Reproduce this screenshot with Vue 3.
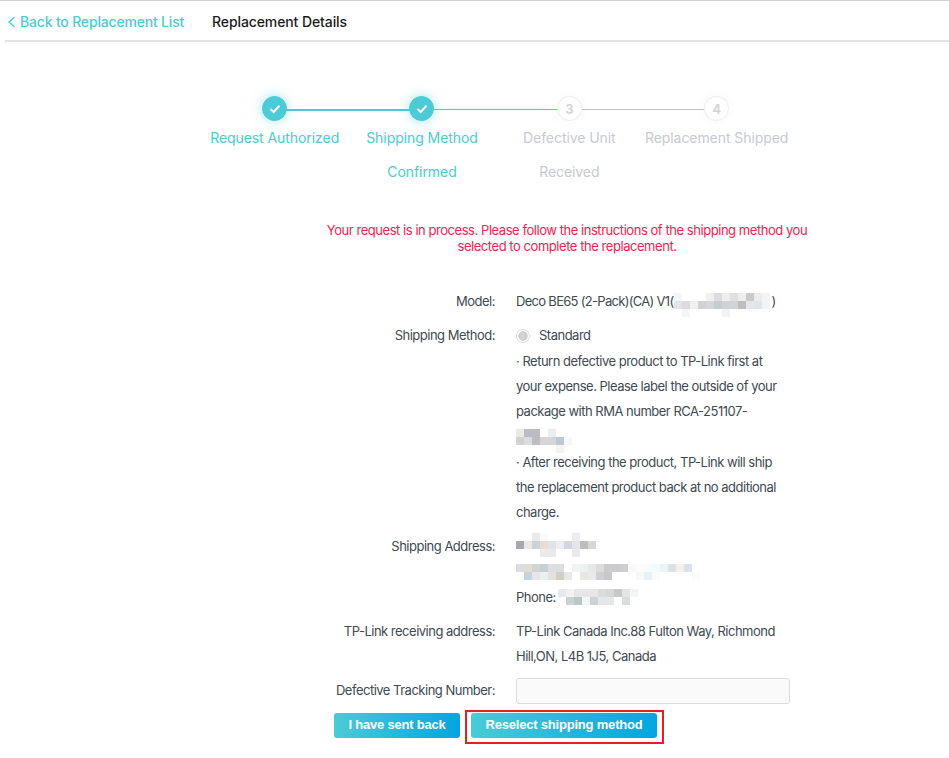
<script setup>
const steps = [
  { n: 1, lines: ['Request Authorized'], done: true, mid: true },
  { n: 2, lines: ['Shipping Method', 'Confirmed'], done: true },
  { n: 3, lines: ['Defective Unit', 'Received'] },
  { n: 4, lines: ['Replacement Shipped'] }
]
const w = '#ffffff'
const mosaics = {
  model: { cols: 12, cells: [
    '#f6f6f6', w, w, w, '#f0f0f0', '#d9dce0', '#eeeeee', '#e0e0e2', '#eeeeee', '#c9cacd', '#ececec', '#f4f4f4',
    '#e4e4e6', '#dcdcdc', '#f0f0f0', '#d2d2d4', '#d5d7da', '#c5ccd2', '#cfd2d6', '#d2d3d5', '#bebec2', '#e3e6ea', '#e2e5e8', '#f3f3f3',
    w, '#f5f5f5', w, w, w, w, '#f3f3f3', w, w, w, w, w
  ] },
  rma: { cols: 7, cells: [
    '#eaeae6', '#b9bcc2', '#bcbcc0', w, '#ededf0', w, w,
    '#d2d2d4', '#dcdcde', '#bcbcc2', '#d5d5d6', '#d6d6d8', '#bdc8d2', '#f5f9fa',
    w, w, w, w, w, '#f2f4f6', w
  ] },
  name: { cols: 10, cells: [
    w, w, '#eaeaec', '#fafafa', w, w, w, '#ececee', w, w,
    '#a9a9ad', '#e6e8ea', '#ccd2d6', '#e8dcd5', '#e2e3e8', '#eeeff1', '#d2d6de', '#e6e6ea', '#bdbdbd', '#d6d8d4',
    w, w, w, '#eaeaec', '#eaeaec', w, w, '#eaeaec', w, w
  ] },
  addr: { cols: 23, cells: [
    '#dcdde0', '#e0ddd5', '#d2d3d5', '#c4d0d3', '#dddedf', '#dddedf', w, '#f2f3f3', '#eeefef', '#e6e7e7', '#dcdcdc', '#cbcbcd', '#cbcbcd', '#cfcfcf', '#fafafa', '#fcfcfc', '#f5fdfd', '#f2fbfd', '#ecf3f7', '#dbe2ea', '#f7efe9', '#dde2ea', w,
    w, '#c6d5dc', '#e2e8e9', '#eaefef', '#e2e2e2', '#cfcfc5', '#e8e9e4', w, '#e6e6e2', '#eaeaea', '#d0d0d2', '#c8c8cc', w, w, w, '#f7f8f8', '#e8f1f3', '#fafafa', w, w, w, w, '#fafafa'
  ] },
  phone: { cols: 10, cells: [
    '#e6eaee', '#f2f2f0', '#e6e6e6', '#e6e6e6', '#e6e6e8', '#dadbdb', '#d6d8d8', '#c8c8c8', '#e2e4e6', '#f4f4f6',
    w, '#ccd2d4', '#bcc5c8', '#f2f6f8', '#cdd2d4', '#e4e6e8', '#e4e6e8', w, '#dadcde', w
  ] }
}
const gridOf = (m) => ({ gridTemplateColumns: `repeat(${m.cols}, 8px)` })
</script>

<template>
  <div class="page">
    <header class="head">
      <a class="back">
        <svg class="chev" width="9" height="12" viewBox="0 0 9 12"><path d="M7.5 1 2 6l5.5 5" fill="none" stroke="currentColor" stroke-width="1.4"/></svg>
        <span>Back to Replacement List</span>
      </a>
      <span class="title">Replacement Details</span>
    </header>

    <ol class="steps">
      <li v-for="s in steps" :key="s.n" class="step" :class="{ done: s.done, mid: s.mid }">
        <div class="dot">
          <svg v-if="s.done" width="12" height="10" viewBox="0 0 12 10"><path d="M1.5 5 4.6 8 10.5 1.8" fill="none" stroke="#fff" stroke-width="2"/></svg>
          <template v-else>{{ s.n }}</template>
        </div>
        <div class="label">
          <div v-for="l in s.lines" :key="l">{{ l }}</div>
        </div>
      </li>
    </ol>

    <p class="notice">Your request is in process. Please follow the instructions of the shipping method you selected to complete the replacement.</p>

    <section class="form">
      <div class="row">
        <div class="key">Model:</div>
        <div class="val nowrap">Deco BE65 (2-Pack)(CA) V1(<span class="mosaic m-model" :style="gridOf(mosaics.model)"><i v-for="(c, i) in mosaics.model.cells" :key="i" :style="{ background: c }"></i></span>)</div>
      </div>
      <div class="row">
        <div class="key">Shipping Method:</div>
        <div class="val">
          <div class="radio-line"><span class="radio"></span>Standard</div>
          <div>· Return defective product to TP-Link first at your expense. Please label the outside of your package with RMA number RCA-251107-</div>
          <div class="line"><span class="mosaic m-rma" :style="gridOf(mosaics.rma)"><i v-for="(c, i) in mosaics.rma.cells" :key="i" :style="{ background: c }"></i></span></div>
          <div>· After receiving the product, TP-Link will ship the replacement product back at no additional charge.</div>
        </div>
      </div>
      <div class="row">
        <div class="key">Shipping Address:</div>
        <div class="val">
          <div class="line"><span class="mosaic m-name" :style="gridOf(mosaics.name)"><i v-for="(c, i) in mosaics.name.cells" :key="i" :style="{ background: c }"></i></span></div>
          <div class="line"><span class="mosaic m-addr" :style="gridOf(mosaics.addr)"><i v-for="(c, i) in mosaics.addr.cells" :key="i" :style="{ background: c }"></i></span></div>
          <div class="line">Phone:<span class="mosaic m-phone" :style="gridOf(mosaics.phone)"><i v-for="(c, i) in mosaics.phone.cells" :key="i" :style="{ background: c }"></i></span></div>
        </div>
      </div>
      <div class="row">
        <div class="key">TP-Link receiving address:</div>
        <div class="val">TP-Link Canada Inc.88 Fulton Way, Richmond Hill,ON, L4B 1J5, Canada</div>
      </div>
      <div class="row track">
        <div class="key">Defective Tracking Number:</div>
        <div class="val"><input class="input" type="text" /></div>
      </div>
      <div class="actions">
        <button class="btn sent">I have sent back</button>
        <span class="outline"><button class="btn">Reselect shipping method</button></span>
      </div>
    </section>
  </div>
</template>

<style scoped>
.page { width: 949px; height: 758px; box-sizing: border-box; border-top: 1px solid #d0d0d0; font-family: Inter, "Noto Sans", sans-serif; color: #3c4a52; font-size: 13px; letter-spacing: -0.5px; overflow: hidden; background: #fff; }
.head { margin-left: 5px; height: 41px; box-sizing: border-box; padding-top: 2px; border-bottom: 2px solid #e4e4e4; display: flex; align-items: center; font-size: 14px; }
.back { color: #4acbd6; display: flex; align-items: center; gap: 4px; width: 205px; margin-left: 2px; letter-spacing: -0.18px; font-weight: 500; }
.chev { flex: none; }
.title { color: #1c1c1c; font-weight: 500; letter-spacing: -0.1px; }
.steps { list-style: none; margin: 54px 0 0 201px; padding: 0; display: flex; letter-spacing: -0.07px; }
.step { width: 147.33px; position: relative; display: flex; flex-direction: column; align-items: center; color: #c5cad3; }
.step.done { color: #4acbd6; }
.step::after { content: ""; position: absolute; left: 50%; width: 147.33px; top: 13px; height: 1px; background: #c3c0c8; }
.step:last-child::after { display: none; }
.step.done::after { background: #4acbd6; }
.step.mid::after { height: 2px; }
.dot { width: 23px; height: 23px; border: 1px solid #eee; border-radius: 50%; background: #fff; position: relative; z-index: 1; display: flex; align-items: center; justify-content: center; font-size: 13px; font-weight: 700; color: #d5d5d5; box-shadow: 0 0 8px rgba(200,200,200,.15); }
.done .dot { background: #4acbd6; border-color: #4acbd6; box-shadow: 0 0 12px rgba(74,203,214,.5); }
.label { font-size: 14px; line-height: 34px; text-align: center; }
.notice { margin: 33px 0 0 322px; width: 490px; color: #f5224e; text-align: center; line-height: 16px; font-size: 13px; letter-spacing: -0.45px; }
.form { margin-top: 34.6px; }
.row { display: flex; line-height: 25.2px; margin-bottom: 9px; }
.key { width: 495px; text-align: right; flex: none; }
.val { margin-left: 21px; width: 274px; }
.nowrap { white-space: nowrap; letter-spacing: -0.7px; }
.line { height: 25.2px; }
.radio-line { display: flex; align-items: center; height: 26px; }
.radio { width: 14px; height: 14px; border: 1px solid #dedede; border-radius: 50%; margin-right: 9px; box-sizing: border-box; background: radial-gradient(circle, #d2d2d2 0 4.5px, #fff 5px); }
.mosaic { display: inline-grid; vertical-align: top; grid-auto-rows: 8px; line-height: 0; }
.mosaic i { display: block; }
.m-model { margin: 4px 1px -24px 1px; }
.m-rma { margin: 5px 0 -24px; }
.m-name { margin: -1px 0 -24px; }
.m-addr { margin: 5px 0 -16px; }
.m-phone { margin: 4px 0 -16px 2px; }
.row.track { margin-bottom: 6px; }
.input { display: block; width: 274px; height: 26px; box-sizing: border-box; border: 1px solid #dcdcdc; border-radius: 3px; background: #fafafa; }
.actions { margin-left: 334px; display: flex; align-items: flex-start; }
.btn { height: 25px; border: 0; border-radius: 3px; color: #fff; font: 700 13px "Liberation Sans", Arial, sans-serif; letter-spacing: -0.2px; padding: 0 0 2px; width: 186px; background: linear-gradient(90deg, #4acbd6, #04a5e0); }
.sent { width: 126px; margin: 3px 5px 0 0; }
.outline { border: 2px solid #ed1c24; padding: 1px 5px 4px 4px; display: flex; }
</style>
